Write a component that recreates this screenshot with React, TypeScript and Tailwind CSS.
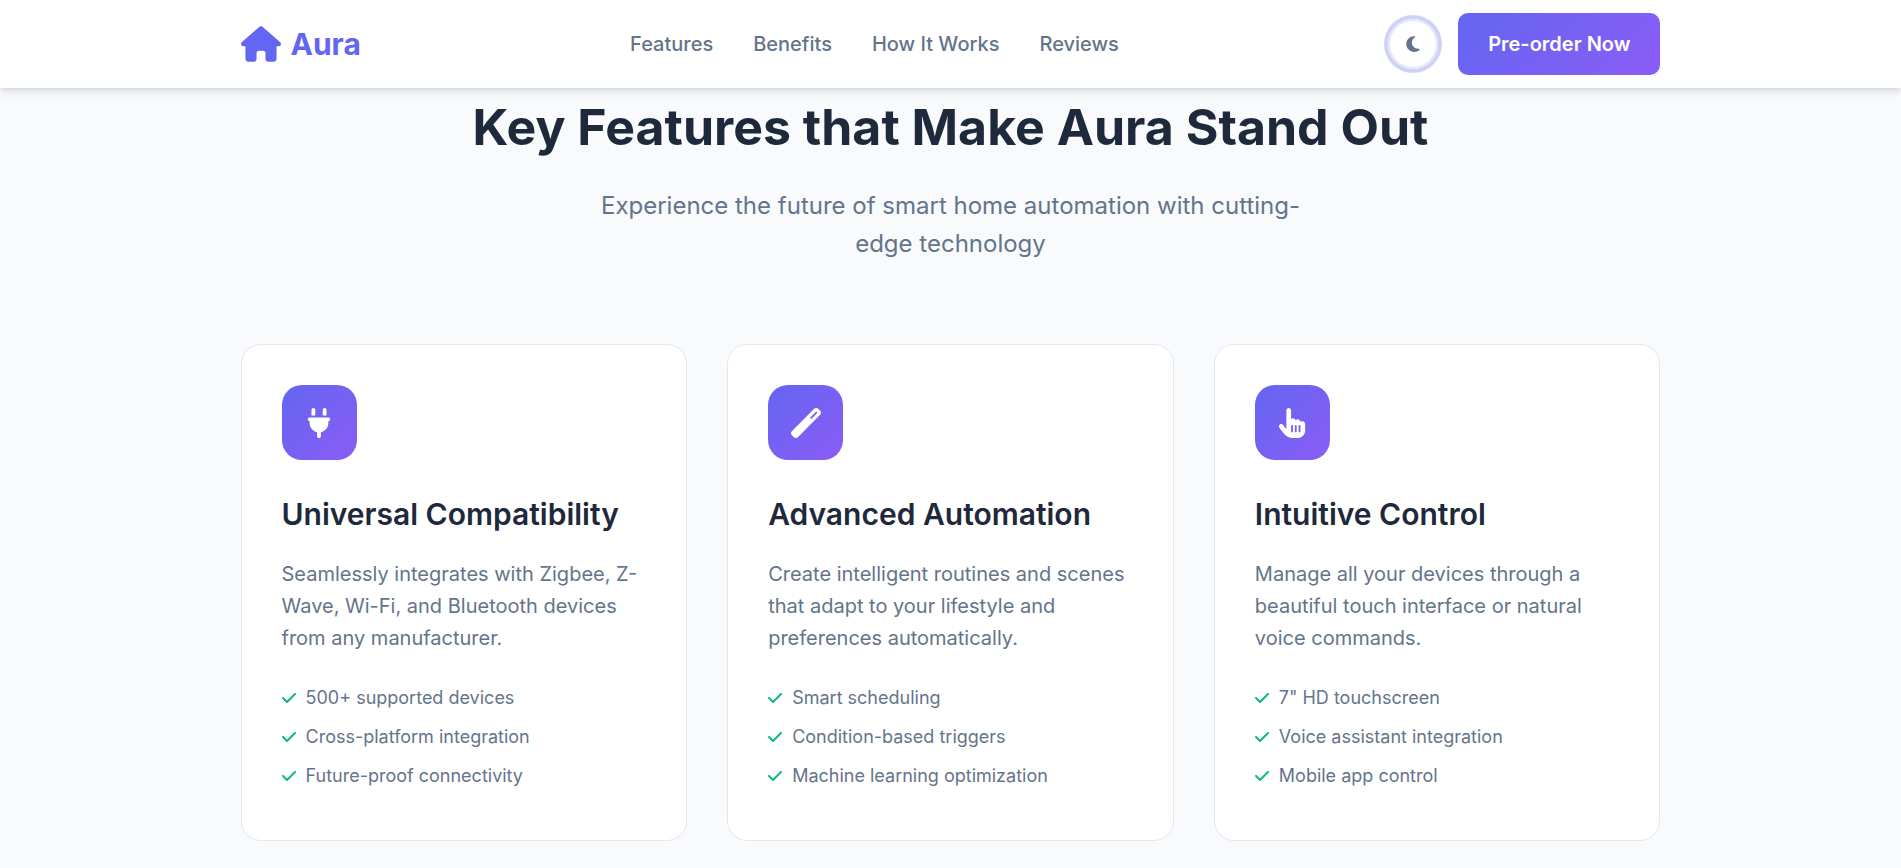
import type { IconType } from "react-icons";
import {
  FaCheck,
  FaHandPointer,
  FaHouse,
  FaMoon,
  FaPlug,
  FaWandMagic,
} from "react-icons/fa6";

type Feature = {
  title: string;
  description: string;
  icon: IconType;
  points: string[];
};

const navLinks = [
  { label: "Features", href: "#features" },
  { label: "Benefits", href: "#benefits" },
  { label: "How It Works", href: "#how-it-works" },
  { label: "Reviews", href: "#reviews" },
];

const features: Feature[] = [
  {
    title: "Universal Compatibility",
    description:
      "Seamlessly integrates with Zigbee, Z-Wave, Wi-Fi, and Bluetooth devices from any manufacturer.",
    icon: FaPlug,
    points: [
      "500+ supported devices",
      "Cross-platform integration",
      "Future-proof connectivity",
    ],
  },
  {
    title: "Advanced Automation",
    description:
      "Create intelligent routines and scenes that adapt to your lifestyle and preferences automatically.",
    icon: FaWandMagic,
    points: [
      "Smart scheduling",
      "Condition-based triggers",
      "Machine learning optimization",
    ],
  },
  {
    title: "Intuitive Control",
    description:
      "Manage all your devices through a beautiful touch interface or natural voice commands.",
    icon: FaHandPointer,
    points: [
      '7" HD touchscreen',
      "Voice assistant integration",
      "Mobile app control",
    ],
  },
];

function Header() {
  return (
    <header className="sticky top-0 z-10 bg-white shadow-[0_5px_8px_-1px_rgba(15,40,60,0.1),0_2px_5px_-1px_rgba(15,40,60,0.1)]">
      <div className="max-w-[1500px] mx-auto px-10 h-22 flex items-center justify-between">
        <a
          href="#"
          className="flex items-center gap-2.5 text-3xl font-bold text-[#6366f1]"
        >
          <FaHouse className="w-10 h-9" />
          <span>Aura</span>
        </a>
        <nav className="flex gap-10 max-lg:hidden">
          {navLinks.map((link) => (
            <a
              key={link.label}
              href={link.href}
              className="text-xl leading-8 font-medium text-[#64748b]"
            >
              {link.label}
            </a>
          ))}
        </nav>
        <div className="flex items-center gap-5">
          <button
            aria-label="Toggle dark mode"
            className="size-[50px] flex items-center justify-center rounded-full border-2 border-[#e6e7fb] ring-4 ring-[#d0d1f7] text-[#64748b]"
          >
            <FaMoon className="size-[18px]" />
          </button>
          <button className="px-[30px] py-[15px] rounded-[10px] text-xl leading-8 font-semibold text-white bg-[linear-gradient(135deg,#6366f1,#8b5cf6)]">
            Pre-order Now
          </button>
        </div>
      </div>
    </header>
  );
}

function FeatureCard({ feature }: { feature: Feature }) {
  const Icon = feature.icon;
  return (
    <article className="bg-white border border-[#e2e8f0] rounded-[20px] p-10">
      <div className="size-[75px] flex items-center justify-center rounded-[20px] text-white bg-[linear-gradient(135deg,#6366f1,#8b5cf6)]">
        <Icon className="size-[30px]" />
      </div>
      <h3 className="mt-[30px] text-3xl leading-12 font-semibold text-[#1e293b]">
        {feature.title}
      </h3>
      <p className="mt-5 text-xl leading-8 text-[#64748b]">
        {feature.description}
      </p>
      <ul className="mt-[29px]">
        {feature.points.map((point) => (
          <li
            key={point}
            className="flex items-center gap-2.5 mb-2.5 text-lg leading-[29px] text-[#64748b]"
          >
            <FaCheck className="w-3.5 h-4 text-[#10b981]" />
            <span>{point}</span>
          </li>
        ))}
      </ul>
    </article>
  );
}

function App() {
  return (
    <div className="min-h-screen bg-[#f8fafc] font-[Inter,sans-serif]">
      <Header />
      <main id="features" className="max-w-[1500px] mx-auto px-10 pb-6">
        <div className="text-center">
          <h2 className="text-[50px] leading-[78px] font-bold text-[#1e293b]">
            Key Features that Make Aura Stand Out
          </h2>
          <p className="mt-[21px] max-w-[750px] mx-auto text-2xl leading-[38px] text-[#64748b]">
            Experience the future of smart home automation with cutting-edge
            technology
          </p>
        </div>
        <div className="mt-[81px] grid grid-cols-3 gap-10 max-lg:grid-cols-1">
          {features.map((feature) => (
            <FeatureCard key={feature.title} feature={feature} />
          ))}
        </div>
      </main>
    </div>
  );
}

export default App;
